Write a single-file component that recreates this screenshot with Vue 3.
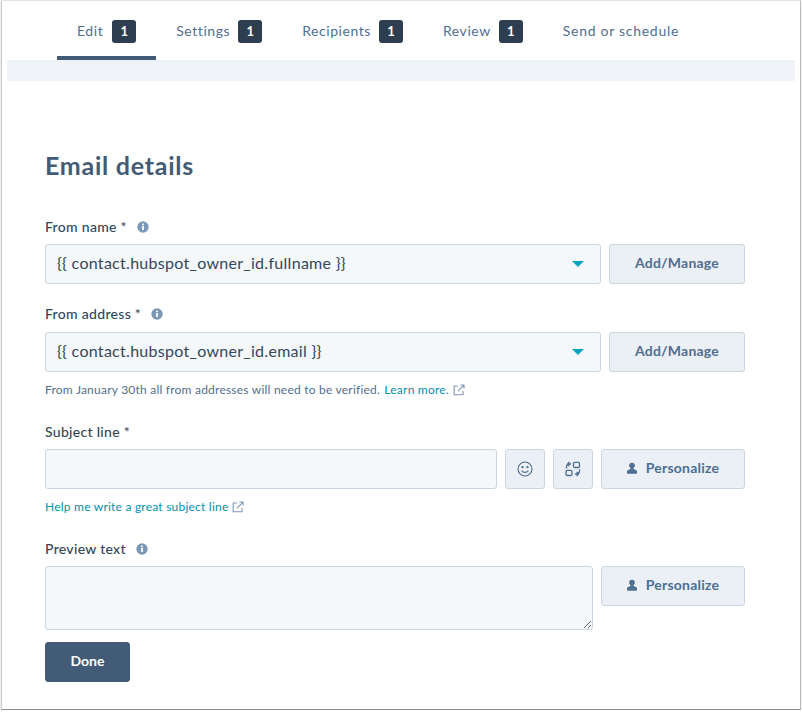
<script setup>
const tabs = [
  { label: 'Edit', badge: 1, active: true },
  { label: 'Settings', badge: 1 },
  { label: 'Recipients', badge: 1 },
  { label: 'Review', badge: 1 },
  { label: 'Send or schedule' },
]
</script>

<template>
  <div class="window">
    <nav class="tabs">
      <div v-for="t in tabs" :key="t.label" class="tab" :class="{ active: t.active }">
        <span class="tab-text">{{ t.label }}</span>
        <span v-if="t.badge" class="badge">{{ t.badge }}</span>
      </div>
    </nav>
    <div class="band"></div>
    <main class="form">
      <h1>Email details</h1>

      <div class="label l1">From name *
        <svg class="info" viewBox="0 0 12 12"><circle cx="6" cy="6" r="5.7" fill="#7c98b6"/><rect x="5.1" y="5" width="1.8" height="4" fill="#fff"/><rect x="5.1" y="2.6" width="1.8" height="1.6" fill="#fff"/></svg>
      </div>
      <div class="row">
        <div class="field select">
          <span class="val">{{ '{' + '{ contact.hubspot_owner_id.fullname }' + '}' }}</span>
          <i class="caret"></i>
        </div>
        <button class="btn manage"><span class="txt">Add/Manage</span></button>
      </div>

      <div class="label l2">From address *
        <svg class="info" viewBox="0 0 12 12"><circle cx="6" cy="6" r="5.7" fill="#7c98b6"/><rect x="5.1" y="5" width="1.8" height="4" fill="#fff"/><rect x="5.1" y="2.6" width="1.8" height="1.6" fill="#fff"/></svg>
      </div>
      <div class="row">
        <div class="field select">
          <span class="val">{{ '{' + '{ contact.hubspot_owner_id.email }' + '}' }}</span>
          <i class="caret"></i>
        </div>
        <button class="btn manage"><span class="txt">Add/Manage</span></button>
      </div>
      <p class="help h1">From January 30th all from addresses will need to be verified.
        <a>Learn more.</a>
        <svg class="ext" viewBox="0 0 12 12" fill="none" stroke="#7c98b6" stroke-width="1.1"><path d="M5 2H1.2v8.800H10V7"/><path d="M5 7.200 11 1.200M7.400 1H11v3.600"/></svg>
      </p>

      <div class="label l3">Subject line *</div>
      <div class="row">
        <div class="field grow"></div>
        <button class="btn icon" aria-label="Emoji">
          <svg viewBox="0 0 16 16" fill="none" stroke="#516f90" stroke-width="1.1"><circle cx="8" cy="8" r="7"/><circle cx="5.500" cy="6.200" r=".6" fill="#516f90"/><circle cx="10.500" cy="6.200" r=".6" fill="#516f90"/><path d="M4.600 9.600c1.600 2.400 5.200 2.400 6.800 0"/></svg>
        </button>
        <button class="btn icon" aria-label="Snippets">
          <svg viewBox="0 0 16 16" fill="none" stroke="#516f90" stroke-width="1.3"><rect x="8.500" y="1.300" width="6" height="5.200" rx="1.200"/><rect x="1" y="9.300" width="6" height="5.200" rx="1.200"/><path d="M1.500 7.500V5.800C1.500 4 2.800 3 4.500 3H6M4.300 1 2.600 3l1.700 2"/><path d="M14.500 8.500v1.700c0 1.800-1.300 2.800-3 2.800H10M11.700 15l1.700-2-1.700-2"/></svg>
        </button>
        <button class="btn wide">
          <svg class="person" viewBox="0 0 12 14" fill="#516f90"><circle cx="6" cy="4" r="3.400"/><path d="M4.200 7h3.600v1.300l2.800 1c.9.300 1.400 1 1.400 1.800V13c0 .6-.4 1-1 1H1c-.6 0-1-.4-1-1v-1.900c0-.8.500-1.500 1.400-1.800l2.800-1z"/></svg>
          <span class="txt">Personalize</span>
        </button>
      </div>
      <p class="help h2"><a>Help me write a great subject line</a>
        <svg class="ext" viewBox="0 0 12 12" fill="none" stroke="#7c98b6" stroke-width="1.1"><path d="M5 2H1.200v8.800H10V7"/><path d="M5 7.200 11 1.200M7.400 1H11v3.600"/></svg>
      </p>

      <div class="label l4">Preview text
        <svg class="info" viewBox="0 0 12 12"><circle cx="6" cy="6" r="5.700" fill="#7c98b6"/><rect x="5.100" y="5" width="1.800" height="4" fill="#fff"/><rect x="5.100" y="2.600" width="1.800" height="1.600" fill="#fff"/></svg>
      </div>
      <div class="row top">
        <textarea class="field grow area"></textarea>
        <button class="btn wide">
          <svg class="person" viewBox="0 0 12 14" fill="#516f90"><circle cx="6" cy="4" r="3.400"/><path d="M4.200 7h3.600v1.300l2.800 1c.9.300 1.400 1 1.400 1.800V13c0 .6-.4 1-1 1H1c-.6 0-1-.4-1-1v-1.900c0-.8.500-1.500 1.400-1.800l2.800-1z"/></svg>
          <span class="txt">Personalize</span>
        </button>
      </div>
      <button class="done"><span class="txt">Done</span></button>
    </main>
  </div>
</template>

<style>
html, body { margin: 0; background: #fff; }
</style>

<style scoped>
.window {
  box-sizing: border-box;
  width: 800px;
  height: 710px;
  margin-left: 1px;
  border-left: 1px solid #c9c9c9;
  border-right: 1px solid #bdbdbd;
  border-top: 1px solid #e4e4e4;
  border-bottom: 1px solid #8e8e8e;
  box-shadow: 0 1px 2px rgba(0,0,0,.2);
  background: #fff;
  font-family: Lato, "Noto Sans", sans-serif;
  color: #33475b;
  overflow: hidden;
}
.tabs {
  display: flex;
  height: 59px;
  padding-left: 55px;
  box-sizing: border-box;
}
.tab {
  display: flex;
  align-items: flex-start;
  gap: 8px;
  padding: 19px 20px 0;
  font-size: 14px;
  letter-spacing: .56px;
  color: #516f90;
  box-sizing: border-box;
}
.tab.active { gap: 9px; }
.tab:last-child { letter-spacing: .72px; }
.tab-text { line-height: 21px; }
.tab.active { box-shadow: inset 0 -4px 0 #425b76; }
.badge {
  display: block;
  width: 24px;
  height: 23px;
  line-height: 22px;
  border-radius: 3px;
  background: #2d3e50;
  color: #fff;
  font-size: 13px;
  font-weight: 700;
  text-align: center;
  letter-spacing: 0;
}
.band {
  height: 21px;
  margin: 0 5px;
  background: #f0f3f7;
  border-top: 1px solid #eaf0f6;
  box-sizing: border-box;
}
.form { padding: 0 55px 0 43px; }
h1 {
  margin: 69px 0 0;
  font-size: 25px;
  line-height: 30px;
  font-weight: 700;
  color: #425b76;
  letter-spacing: .75px;
}
.label {
  display: flex;
  align-items: center;
  font-size: 14px;
  line-height: 20px;
  font-weight: 500;
  color: #33475b;
  letter-spacing: .3px;
}
.l1 { margin-top: 37px; margin-bottom: 7px; }
.l2 { margin-top: 20px; margin-bottom: 8px; }
.l3 { margin-top: 23px; margin-bottom: 7px; }
.l4 { margin-top: 23px; margin-bottom: 7px; }
.info { width: 12px; height: 12px; margin-left: 10px; }
.row { display: flex; gap: 8px; }
.row.top { align-items: flex-start; }
.field {
  box-sizing: border-box;
  height: 40px;
  background: #f5f8fa;
  border: 1px solid #cbd6e2;
  border-radius: 3px;
  font-size: 16px;
  color: #33475b;
  font-family: inherit;
}
.select {
  flex: 1;
  display: flex;
  align-items: center;
  justify-content: space-between;
  padding: 0 16px 0 11px;
  letter-spacing: .29px;
}
.val { position: relative; top: -2px; }
.grow { flex: 1; min-width: 0; }
.area { height: 64px; display: block; padding: 8px; resize: vertical; margin: 0; outline: none; }
.caret {
  width: 0; height: 0;
  border-left: 6px solid transparent;
  border-right: 6px solid transparent;
  border-top: 6px solid #00a4bd;
}
.btn {
  box-sizing: border-box;
  height: 40px;
  background: #eaf0f6;
  border: 1px solid #cbd6e2;
  border-radius: 3px;
  color: #506e91;
  font-family: inherit;
  font-size: 14px;
  font-weight: 700;
  letter-spacing: .22px;
  display: flex;
  align-items: center;
  justify-content: center;
  padding: 0;
  flex: none;
}
.txt { position: relative; top: -2px; }
.wide { width: 144px; }
.manage { width: 136px; }
.icon { width: 40px; }
.icon svg { width: 16px; height: 16px; }
.person { width: 10px; height: 12px; margin-right: 9px; position: relative; top: -1px; }
.help {
  margin: 0;
  display: flex;
  align-items: center;
  font-size: 12px;
  line-height: 18px;
  color: #516f90;
  letter-spacing: .22px;
  white-space: pre;
}
.help a { color: #0091ae; margin-left: 1px; }
.help.h2 a { margin-left: 0; }
.h1 { margin-top: 9px; }
.h2 { margin-top: 9px; }
.ext { width: 12px; height: 12px; margin-left: 4px; }
.done {
  display: block;
  margin-top: 12px;
  width: 85px;
  height: 40px;
  border: 1px solid #425b76;
  border-radius: 3px;
  background: #425b76;
  color: #fff;
  font-family: inherit;
  font-size: 14px;
  font-weight: 700;
  padding: 0;
}
</style>
